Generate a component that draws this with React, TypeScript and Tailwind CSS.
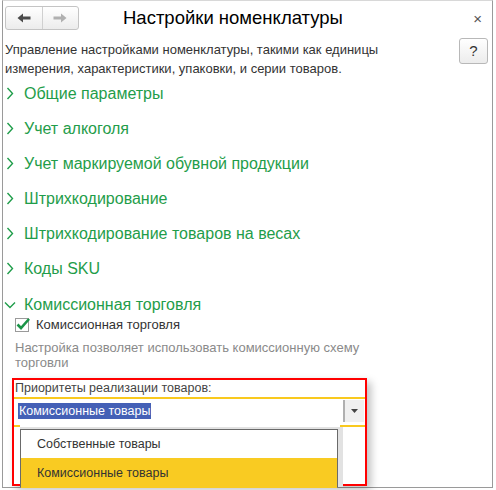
import React from 'react';

const font = { fontFamily: '"Liberation Sans", Arial, sans-serif' };

const Chevron = ({ open }: { open?: boolean }) =>
    open ? (
        <svg width="12" height="8" viewBox="0 0 12 8" className="shrink-0">
            <polyline points="1,1.5 6,6.5 11,1.5" fill="none" stroke="#1f9d4a" strokeWidth="1.4" />
        </svg>
    ) : (
        <svg width="8" height="13" viewBox="0 0 8 13" className="shrink-0">
            <polyline points="1.5,1 6.5,6.5 1.5,12" fill="none" stroke="#1f9d4a" strokeWidth="1.4" />
        </svg>
    );

const sections = [
    'Общие параметры',
    'Учет алкоголя',
    'Учет маркируемой обувной продукции',
    'Штрихкодирование',
    'Штрихкодирование товаров на весах',
    'Коды SKU',
];

const App = () => {
    return (
        <div className="w-[496px] h-[490px] bg-white overflow-hidden" style={font}>
            <div className="ml-[2px] mr-[3px] h-[488px] border-x border-b border-t border-t-[#d8d8d8] border-x-[#9a9a9a] border-b-[#9a9a9a] bg-white relative">
                {/* header */}
                <div className="flex items-center h-[34px] pl-[2px] pr-[10px]">
                    <div className="flex h-[24px] w-[74px] rounded-[3px] border border-[#c4c4c4] bg-gradient-to-b from-white to-[#ececec]">
                        <div className="flex-1 flex items-center justify-center border-r border-[#d0d0d0]">
                            <svg width="14" height="10" viewBox="0 0 14 10">
                                <path d="M0.5 5 L6 0.5 L6 3.5 L13.5 3.5 L13.5 6.5 L6 6.5 L6 9.5 Z" fill="#4a4a4a" />
                            </svg>
                        </div>
                        <div className="flex-1 flex items-center justify-center">
                            <svg width="14" height="10" viewBox="0 0 14 10">
                                <path d="M13.5 5 L8 0.5 L8 3.5 L0.5 3.5 L0.5 6.5 L8 6.5 L8 9.5 Z" fill="#b0b0b0" />
                            </svg>
                        </div>
                    </div>
                    <div className="ml-[44px] text-[18.5px] text-black leading-none">Настройки номенклатуры</div>
                    <div className="ml-auto text-[15px] text-[#555] leading-none">×</div>
                </div>

                {/* description */}
                <div className="flex items-start pl-[2px] pr-[4px] mt-[5px]">
                    <div className="text-[13px] leading-[19px] text-[#333] flex-1">
                        Управление настройками номенклатуры, такими как единицы<br />
                        измерения, характеристики, упаковки, и серии товаров.
                    </div>
                    <div className="w-[29px] h-[26px] -mt-[2px] rounded-[3px] border border-[#b8b8b8] bg-gradient-to-b from-white to-[#ececec] flex items-center justify-center text-[15px] text-[#333]">?</div>
                </div>

                {/* sections */}
                <div className="-mt-[2px]">
                    {sections.map((s) => (
                        <div key={s} className="h-[35px] flex items-center pl-[3px] gap-[10px]">
                            <Chevron />
                            <span className="text-[16px] text-[#1f9d4a]">{s}</span>
                        </div>
                    ))}
                    <div className="h-[31px] pt-[6px] flex items-center pl-[1px] gap-[8px]">
                        <Chevron open />
                        <span className="text-[16px] text-[#1f9d4a]">Комиссионная торговля</span>
                    </div>
                </div>

                <div className="pl-[12px]">
                    <div className="flex items-center gap-[7px] h-[16px]">
                        <div className="w-[14px] h-[14px] border border-[#9a9a9a] bg-white relative">
                            <svg width="16" height="14" viewBox="0 0 16 14" className="absolute -left-[1px] -top-[2px]">
                                <polyline points="2.5,7.5 6,11 14,2" fill="none" stroke="#1a9447" strokeWidth="2.6" />
                            </svg>
                        </div>
                        <span className="text-[13px] text-[#333]">Комиссионная торговля</span>
                    </div>
                    <div className="mt-[7px] text-[13px] leading-[15px] text-[#8a8a8a] pr-[110px]">
                        Настройка позволяет использовать комиссионную схему торговли
                    </div>
                </div>

                {/* red box */}
                <div className="ml-[9px] mt-[8px] w-[355px] h-[108px] border-2 border-[#ff0000] shadow-[4px_4px_8px_rgba(0,0,0,0.25)] bg-white">
                    <div className="h-[17px] pl-[1px] text-[12.5px] leading-[17px] text-[#444]">Приоритеты реализации товаров:</div>
                    <div className="h-[2px] bg-[#f9c91e]" />
                    <div className="flex items-center h-[22px] pl-[4px] pr-[1px] mt-[1px]">
                        <span className="bg-[#4460b6] text-white text-[12.5px] leading-[16px] px-[1px]">Комиссионные товары</span>
                        <div className="ml-auto w-[21px] h-[22px] bg-[#f0f0f0] border-l-2 border-[#b0b0b0] flex items-center justify-center">
                            <svg width="7" height="4" viewBox="0 0 7 4">
                                <path d="M0 0 L7 0 L3.5 4 Z" fill="#444" />
                            </svg>
                        </div>
                    </div>
                    <div className="flex mt-[3px]">
                        <div className="w-[6px] h-[2px] bg-[#f9c91e]" />
                        <div className="flex-1" />
                        <div className="w-[25px] h-[2px] bg-[#f9c91e]" />
                    </div>
                    <div className="flex">
                        <div className="ml-[6px] w-[323px] bg-[#e2e2e2] pt-[2px] pr-[5px] h-[60px]">
                            <div className="border border-[#6a6a6a] border-b-0 bg-white h-full">
                                <div className="h-[28px] flex items-center pl-[16px] text-[12.5px] text-[#333]">Собственные товары</div>
                                <div className="h-[30px] flex items-center pl-[16px] text-[12.5px] text-[#333] bg-[#f9cb22]">Комиссионные товары</div>
                            </div>
                        </div>
                    </div>
                </div>
            </div>
        </div>
    );
};

export default App;
